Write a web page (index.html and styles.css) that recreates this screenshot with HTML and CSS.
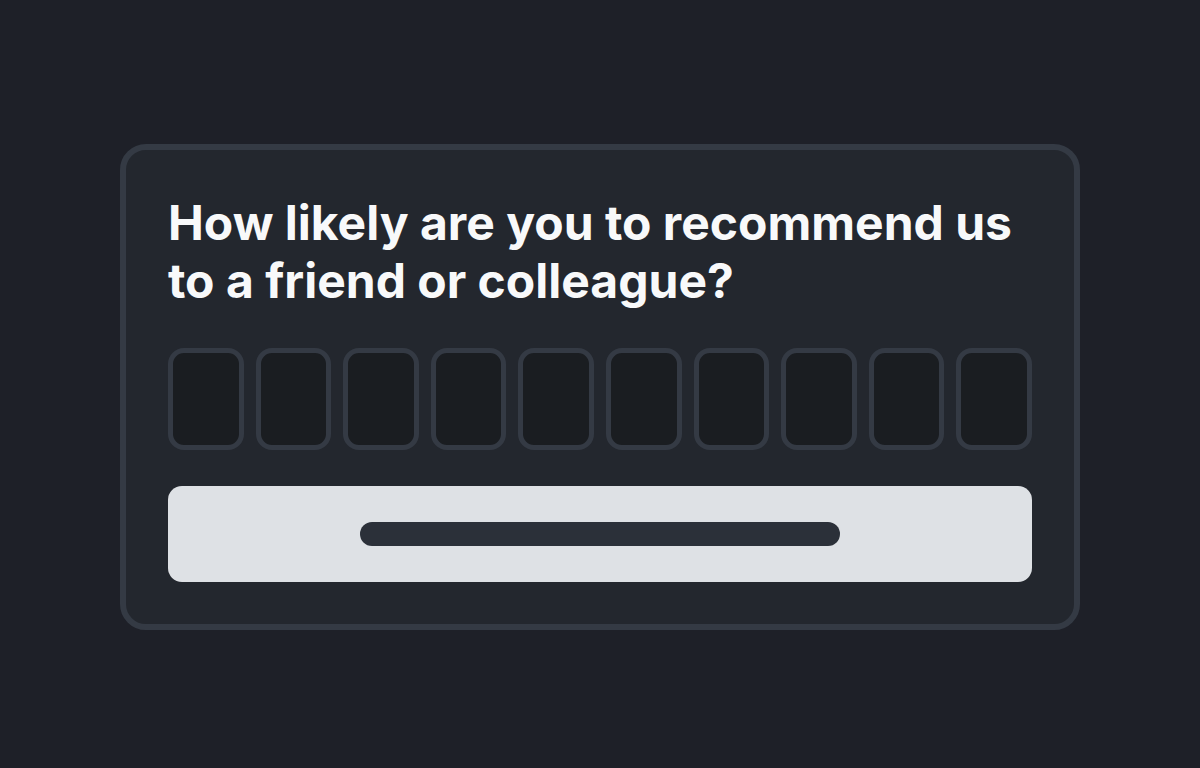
FILE: index.html
```html
<!DOCTYPE html>
<html lang="en">
<head>
  <meta charset="UTF-8" />
  <meta name="viewport" content="width=device-width, initial-scale=1.0" />
  <title>Survey</title>
  <link rel="stylesheet" href="styles.css">
</head>
<body>
  <main class="page">
    <div class="survey-card">
      <h2 class="survey-question">How likely are you to recommend us to a friend or colleague?</h2>

      <div class="score-row">
        <div class="score-box"></div>
        <div class="score-box"></div>
        <div class="score-box"></div>
        <div class="score-box"></div>
        <div class="score-box"></div>
        <div class="score-box"></div>
        <div class="score-box"></div>
        <div class="score-box"></div>
        <div class="score-box"></div>
        <div class="score-box"></div>
      </div>

      <button type="button" class="submit-btn">
        <span class="btn-placeholder"></span>
      </button>
    </div>
  </main>
</body>
</html>
```

FILE: styles.css
```css
* {
  box-sizing: border-box;
}

body {
  font-family: Inter, "Noto Sans", sans-serif;
  background-color: #1e2028;
  margin: 0;
  padding: 0;
}

.page {
  height: 768px;
  padding-top: 6px;
  display: flex;
  justify-content: center;
  align-items: center;
}

.survey-card {
  width: 960px;
  background: #23272e;
  border: 6px solid #343a44;
  border-radius: 26px;
  padding: 42px;
  display: flex;
  flex-direction: column;
}

.survey-question {
  margin: 0 0 38px;
  padding-top: 2px;
  color: #f8f9fa;
  font-size: 48px;
  font-weight: 700;
  line-height: 58px;
}

.score-row {
  display: flex;
  gap: 12px;
  margin-bottom: 36px;
}

.score-box {
  flex: 1;
  height: 102px;
  background: #1a1d21;
  border: 5px solid #343a44;
  border-radius: 16px;
}

.submit-btn {
  height: 96px;
  border: none;
  border-radius: 14px;
  background: #dee1e5;
  display: flex;
  justify-content: center;
  align-items: center;
  cursor: pointer;
}

.btn-placeholder {
  width: 480px;
  height: 24px;
  border-radius: 12px;
  background: #2b3039;
}
```
